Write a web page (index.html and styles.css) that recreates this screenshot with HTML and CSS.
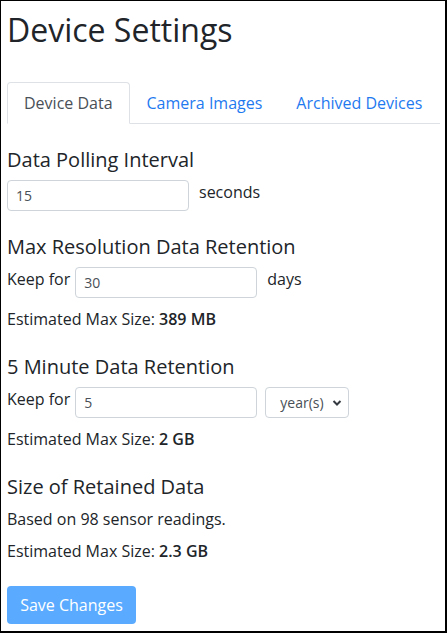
FILE: index.html
```html
<!DOCTYPE html>
<html lang="en">
<head>
    <meta charset="UTF-8">
    <meta name="viewport" content="width=device-width, initial-scale=1.0">
    <title>Device Settings</title>
    <link rel="stylesheet" href="styles.css">
</head>
<body>
    <div class="page">
        <h1>Device Settings</h1>
        <ul class="nav-tabs">
            <li><a class="tab active" href="#">Device Data</a></li>
            <li><a class="tab" href="#">Camera Images</a></li>
            <li><a class="tab" href="#">Archived Devices</a></li>
        </ul>

        <div class="section">
            <h5>Data Polling Interval</h5>
            <div class="row">
                <input class="field" type="text" value="15">
                <span class="unit">seconds</span>
            </div>
        </div>

        <div class="section">
            <h5>Max Resolution Data Retention</h5>
            <div class="row">
                <span class="label">Keep for</span>
                <input class="field" type="text" value="30">
                <span class="unit">days</span>
            </div>
            <p class="info">Estimated Max Size: <b>389 MB</b></p>
        </div>

        <div class="section">
            <h5>5 Minute Data Retention</h5>
            <div class="row">
                <span class="label">Keep for</span>
                <input class="field" type="text" value="5">
                <div class="select">
                    <span>year(s)</span>
                    <svg width="10" height="8" viewBox="0 0 10 8"><path d="M1.5 2 L5 5.5 L8.5 2" fill="none" stroke="#343a40" stroke-width="2"/></svg>
                </div>
            </div>
            <p class="info">Estimated Max Size: <b>2 GB</b></p>
        </div>

        <div class="section">
            <h5>Size of Retained Data</h5>
            <p class="info">Based on 98 sensor readings.</p>
            <p class="info">Estimated Max Size: <b>2.3 GB</b></p>
        </div>

        <button class="btn" disabled>Save Changes</button>
    </div>
</body>
</html>
```

FILE: styles.css
```css
body {
    margin: 0;
    font-family: "Open Sans", "Noto Sans", sans-serif;
    font-size: 16px;
    color: #212529;
    background: #fff;
}
.page {
    box-sizing: border-box;
    height: 633px;
    border: 1px solid #000;
    border-right-width: 2px;
    border-bottom-width: 2px;
    padding: 0 5px 0 6px;
}
h1 {
    font-size: 32px;
    font-weight: 500;
    line-height: 38px;
    margin: 10px 0 33px;
}
.nav-tabs {
    list-style: none;
    margin: 0;
    padding: 0;
    display: flex;
    border-bottom: 1px solid #dee2e6;
}
.tab {
    display: block;
    padding: 8px 16px;
    line-height: 24px;
    color: #1f7af0;
    text-decoration: none;
    border: 1px solid transparent;
    border-radius: 4px 4px 0 0;
    margin-bottom: -1px;
}
.tab.active {
    color: #495057;
    border-color: #dee2e6 #dee2e6 #fff;
    background: #fff;
}
.section {
    margin-top: 24px;
}
h5 {
    font-size: 20px;
    font-weight: 500;
    line-height: 24px;
    margin: 0 0 8px;
}
.row {
    display: flex;
    align-items: flex-start;
}
.label {
    line-height: 24px;
    margin-right: 5px;
}
.field {
    box-sizing: border-box;
    width: 182px;
    height: 31px;
    padding: 0 8px;
    border: 1px solid #ced4da;
    border-radius: 4px;
    font-family: inherit;
    font-size: 14px;
    color: #495057;
}
.unit {
    line-height: 24px;
    margin-left: 10px;
}
.select {
    box-sizing: border-box;
    width: 84px;
    height: 31px;
    margin-left: 8px;
    border: 1px solid #ced4da;
    border-radius: 4px;
    display: flex;
    align-items: center;
    justify-content: space-between;
    padding: 0 6px 0 14px;
    font-size: 14px;
    color: #495057;
}
.info {
    margin: 9px 0 0;
    line-height: 24px;
}
.info b {
    font-weight: 600;
}
.section:nth-of-type(4) .info {
    margin-top: 8px;
}
.btn {
    margin-top: 23px;
    width: 129px;
    height: 38px;
    border: none;
    border-radius: 4px;
    background: #5aabff;
    color: #fff;
    font-family: inherit;
    font-size: 16px;
}
```
